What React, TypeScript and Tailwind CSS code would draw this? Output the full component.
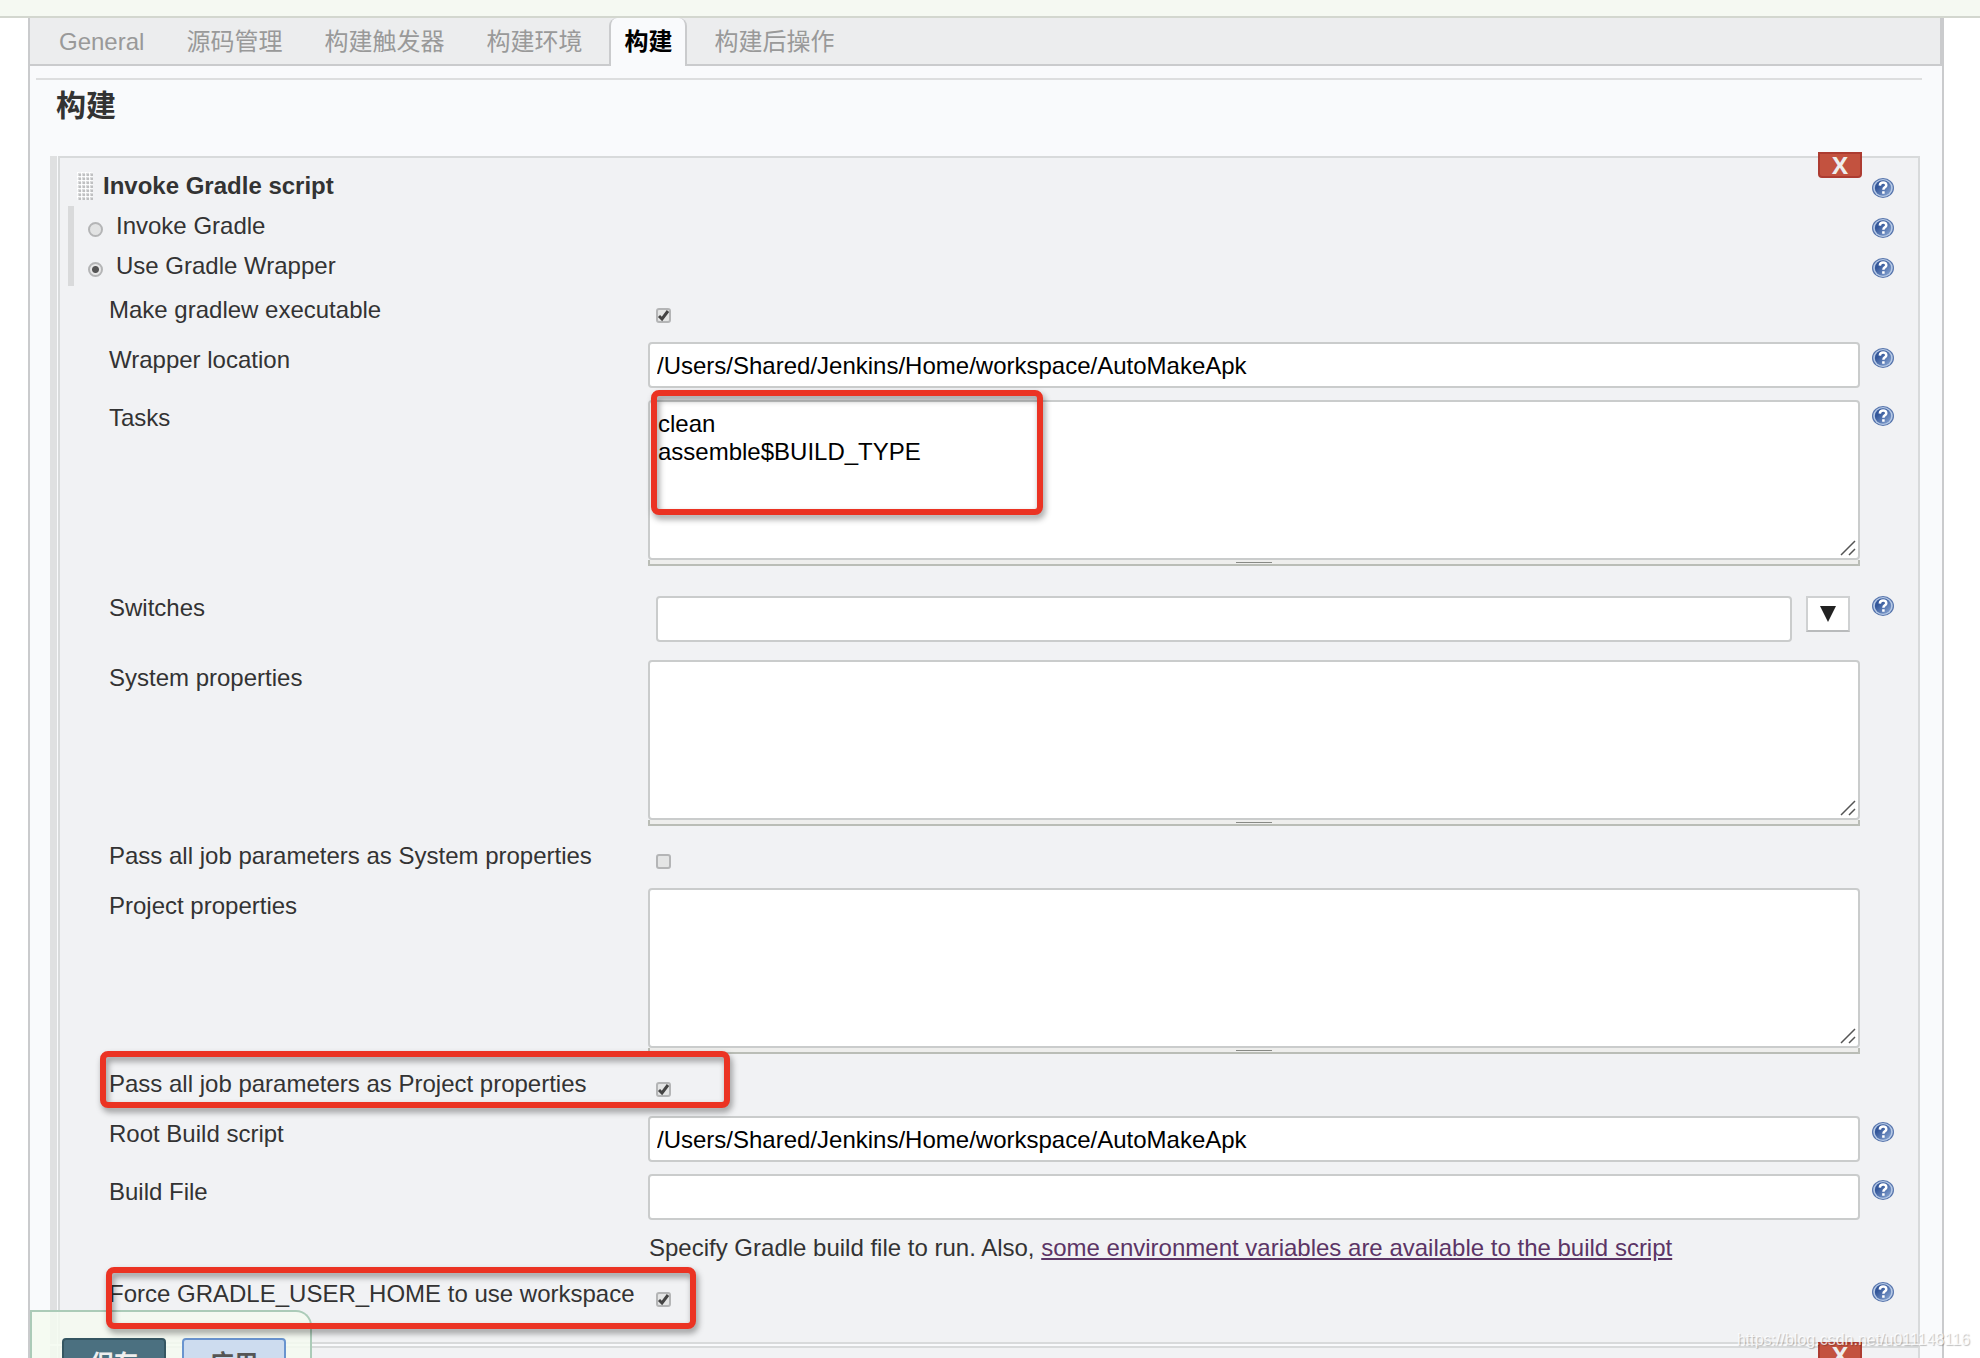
import { useState, type ReactNode } from 'react'

const tabs = ['General', '源码管理', '构建触发器', '构建环境', '构建', '构建后操作']
const workspace = '/Users/Shared/Jenkins/Home/workspace/AutoMakeApk'

const box = 'w-full rounded-[4px] border-2 border-[#cacccc] bg-white text-black outline-none'

export default function App() {
  const [tab, setTab] = useState('构建')

  return (
    <div className="relative flex h-screen flex-col overflow-hidden bg-white font-['Liberation_Sans','Noto_Sans_CJK_SC',sans-serif] text-2xl text-[#333333]">
      <div className="h-[18px] shrink-0 border-b-2 border-[#d3d7cf] bg-[#f5f9f2]" />

      <main className="mr-9 ml-7 shrink-0 border-x-2 border-[#cacbcd] bg-[#f9fafc]">
        <nav className="flex h-12 gap-3 border-r-2 border-b-2 border-[#cacbcd] bg-[#ecedee] pl-3.5">
          {tabs.map(t => (
            <Tab key={t} active={t === tab} onClick={() => setTab(t)}>{t}</Tab>
          ))}
        </nav>

        <div className="pr-[22px] pl-5">
          <h2 className="mt-3 -mr-0.5 -ml-3.5 border-t-2 border-[#dddedf] pl-5 text-[30px] leading-[52px] font-bold">构建</h2>

          <div className="mt-6 flex flex-col gap-0.5">
            <GradleStep />
            <Chunk>
              <div className="h-40" />
            </Chunk>
          </div>
        </div>
      </main>

      <div className="absolute bottom-0 left-[30px] z-10 flex h-12 w-[282px] gap-4 overflow-hidden rounded-tr-[16px] border-2 border-b-0 border-[#abcbb8] bg-[#f5faf0]/85 pt-[26px] pl-[30px]">
        <button className="h-[52px] w-[104px] shrink-0 rounded-[4px] border-2 border-[#355662] bg-[#4b7080] font-bold text-[#eeeeee]">保存</button>
        <button className="h-[52px] w-[104px] shrink-0 rounded-[4px] border-2 border-[#6994cf] bg-[#cddcef] font-bold text-[#555555]">应用</button>
      </div>

      <span className="absolute right-2.5 bottom-1.5 z-10 text-base leading-6 text-white/80 [text-shadow:1px_1px_1px_rgba(0,0,0,0.25)]">
        https://blog.csdn.net/u011148116
      </span>
    </div>
  )
}

function Tab({ active, onClick, children }: { active: boolean; onClick: () => void; children: ReactNode }) {
  return (
    <button
      onClick={onClick}
      className={
        active
          ? 'h-12 rounded-t-[8px] border-x-2 border-[#cacbcd] bg-[#f9fafc] px-[13px] font-bold text-black'
          : 'h-12 border-x-2 border-transparent px-[13px] text-[#999999]'
      }
    >
      {children}
    </button>
  )
}

function Chunk({ children }: { children: ReactNode }) {
  return (
    <section className="relative flex gap-px">
      <div className="w-[7px] shrink-0 bg-[#dfe0e1]" />
      <div className="min-w-0 flex-1 border-2 border-[#d8dadb] bg-[#f1f2f4]">{children}</div>
      <button
        aria-label="Delete"
        className="absolute -top-1 right-[58px] flex h-[26px] w-11 items-center justify-center rounded-b-[4px] border-2 border-[#ad3c31] bg-[#c3523f] font-['Open_Sans',sans-serif] leading-none font-bold text-[#eeeeee]"
      >
        X
      </button>
    </section>
  )
}

function GradleStep() {
  const [mode, setMode] = useState('wrapper')

  return (
    <Chunk>
      <div className="pr-6 pb-7 pl-2">
        <div className="flex h-12 items-start justify-between pt-3.5">
          <div className="flex items-center gap-2.5 pl-[9px]">
            <DragHandle />
            <h3 className="leading-7 font-bold">Invoke Gradle script</h3>
          </div>
          <div className="pt-1.5"><Help /></div>
        </div>

        <div className="border-l-6 border-[#d9dadb]">
          <ModeRadio id="gradle" label="Invoke Gradle" checked={mode === 'gradle'} onChange={() => setMode('gradle')} />
          <ModeRadio id="wrapper" label="Use Gradle Wrapper" checked={mode === 'wrapper'} onChange={() => setMode('wrapper')} />
        </div>

        <div className="mt-1.5 flex flex-col gap-3 pl-10">
          <Row id="executable" label="Make gradlew executable">
            <Check id="executable" defaultChecked />
          </Row>
          <Row id="location" label="Wrapper location" help>
            <TextInput id="location" defaultValue={workspace} />
          </Row>
          <Row
            id="tasks"
            label="Tasks"
            help
            mark={<Mark className="-top-2.5 left-[543px] h-[125px] w-[392px]" />}
          >
            <TextBox id="tasks" defaultValue={'clean\nassemble$BUILD_TYPE'} />
          </Row>
          <div className="py-3">
            <Row id="switches" label="Switches" help>
              <div className="-mb-1.5 flex items-start gap-3.5 pt-1.5 pr-2.5 pl-2">
                <TextInput id="switches" />
                <button aria-label="Expand" className="flex h-9 w-11 shrink-0 items-center justify-center border-2 border-[#cfd1d2] border-b-[#b9bbbc] bg-white">
                  <svg width="16" height="16" viewBox="0 0 16 16" fill="#222222"><path d="M0 0h16L8 16z" /></svg>
                </button>
              </div>
            </Row>
          </div>
          <Row id="sysprops" label="System properties">
            <TextBox id="sysprops" />
          </Row>
          <Row id="passsys" label="Pass all job parameters as System properties">
            <Check id="passsys" />
          </Row>
          <Row id="projprops" label="Project properties">
            <TextBox id="projprops" />
          </Row>
          <Row
            id="passproj"
            label="Pass all job parameters as Project properties"
            mark={<Mark className="-top-[15px] -left-2 h-[57px] w-[630px]" />}
          >
            <Check id="passproj" defaultChecked />
          </Row>
          <Row id="root" label="Root Build script" help>
            <TextInput id="root" defaultValue={workspace} />
          </Row>
          <Row id="buildfile" label="Build File" help>
            <TextInput id="buildfile" />
            <p className="mt-3 pl-px leading-8">
              Specify Gradle build file to run. Also,{' '}
              <a href="#env" className="text-[#5c3566] underline">some environment variables are available to the build script</a>
            </p>
          </Row>
          <Row
            id="home"
            label="Force GRADLE_USER_HOME to use workspace"
            help
            mark={<Mark className="-top-[9px] -left-0.5 h-[62px] w-[590px]" />}
          >
            <Check id="home" defaultChecked />
          </Row>
        </div>
      </div>
    </Chunk>
  )
}

function Row({ id, label, help, mark, children }: {
  id: string
  label: string
  help?: boolean
  mark?: ReactNode
  children: ReactNode
}) {
  return (
    <div className="relative flex items-start">
      <label htmlFor={id} className="w-[540px] shrink-0 pl-px leading-9">{label}</label>
      <div className="min-w-0 flex-1">{children}</div>
      <div className="w-[34px] shrink-0 pt-1.5 pl-3">{help && <Help />}</div>
      {mark}
    </div>
  )
}

// red highlight frame laid over a row
function Mark({ className }: { className: string }) {
  return (
    <div className={`pointer-events-none absolute z-20 rounded-[8px] border-6 border-[#eb3323] drop-shadow-[2px_4px_3px_rgba(0,0,0,0.4)] ${className}`} />
  )
}

function ModeRadio({ id, label, checked, onChange }: {
  id: string
  label: string
  checked: boolean
  onChange: () => void
}) {
  return (
    <div className="flex h-10 items-start">
      <input
        type="radio"
        id={id}
        name="mode"
        checked={checked}
        onChange={onChange}
        className="mt-4 ml-3.5 size-[15px] appearance-none rounded-full border-2 border-[#b4b5b6] bg-[#e2e3e3] checked:bg-[radial-gradient(circle,#555555_0_3px,#e8e8e8_4px)]"
      />
      <label htmlFor={id} className="flex-1 pl-[13px] leading-10">{label}</label>
      <div className="pt-3"><Help /></div>
    </div>
  )
}

function Check({ id, defaultChecked }: { id: string; defaultChecked?: boolean }) {
  return (
    <div className="grid h-[38px] w-[31px] justify-items-start pt-4 pl-2">
      <input
        type="checkbox"
        id={id}
        defaultChecked={defaultChecked}
        className="peer col-start-1 row-start-1 size-[15px] appearance-none rounded-[3px] border-2 border-[#b4b5b6] bg-[#e4e5e5]"
      />
      <svg viewBox="0 0 15 15" className="pointer-events-none col-start-1 row-start-1 hidden size-[15px] peer-checked:block" fill="none" stroke="#444444" strokeWidth="3">
        <path d="M3 8l3 3 6-8" />
      </svg>
    </div>
  )
}

function TextInput({ id, defaultValue }: { id: string; defaultValue?: string }) {
  return <input type="text" id={id} defaultValue={defaultValue} className={`${box} block h-[46px] px-[7px] pt-0.5`} />
}

function TextBox({ id, defaultValue }: { id: string; defaultValue?: string }) {
  return (
    <div className="grid">
      <textarea id={id} defaultValue={defaultValue} className={`${box} col-start-1 row-start-1 block h-40 resize-none px-2 py-2 leading-7`} />
      <svg width="16" height="16" viewBox="0 0 16 16" className="pointer-events-none col-start-1 row-start-1 mr-1 mb-1 self-end justify-self-end" stroke="#555555" strokeWidth="1.5">
        <path d="M1 15L15 1M9 15l6-6" />
      </svg>
      <div className="flex h-1.5 items-start justify-center border-x-2 border-b-2 border-[#babdb6] bg-[#eeeeec] pt-0.5">
        <div className="h-px w-9 bg-[#888a85]" />
      </div>
    </div>
  )
}

function DragHandle() {
  return (
    <svg width="16" height="28" viewBox="0 0 16 28" className="shrink-0">
      <defs>
        <pattern id="grip" width="4" height="4" patternUnits="userSpaceOnUse">
          <rect width="4" height="4" fill="#f7f8f9" />
          <rect width="2" height="2" fill="#ffffff" />
          <rect x="1" y="1" width="3" height="3" fill="#d9dadb" />
          <rect x="2" y="2" width="2" height="2" fill="#bfc0c1" />
        </pattern>
      </defs>
      <rect width="16" height="28" fill="url(#grip)" />
    </svg>
  )
}

function Help() {
  return (
    <a href="#help" aria-label="Help" className="block shrink-0">
      <svg width="22" height="20" viewBox="0 0 22 20">
        <defs>
          <linearGradient id="help-fill" x1="0" y1="0" x2="1" y2="1">
            <stop offset="0.3" stopColor="#34579a" />
            <stop offset="1" stopColor="#8fabd6" />
          </linearGradient>
        </defs>
        <ellipse cx="11" cy="10" rx="11" ry="10" fill="#5674ac" />
        <ellipse cx="11" cy="10" rx="9.800" ry="8.900" fill="#b7cae6" />
        <ellipse cx="11" cy="10" rx="8.200" ry="7.700" fill="url(#help-fill)" />
        <path d="M7.800 7.600C8 5.500 9.400 4.600 11.100 4.600c1.900 0 3.200 1 3.200 2.600 0 2.200-2.900 2.100-2.900 4.500M11.400 13.300v2.400" fill="none" stroke="#ffffff" strokeWidth="2.500" />
      </svg>
    </a>
  )
}
